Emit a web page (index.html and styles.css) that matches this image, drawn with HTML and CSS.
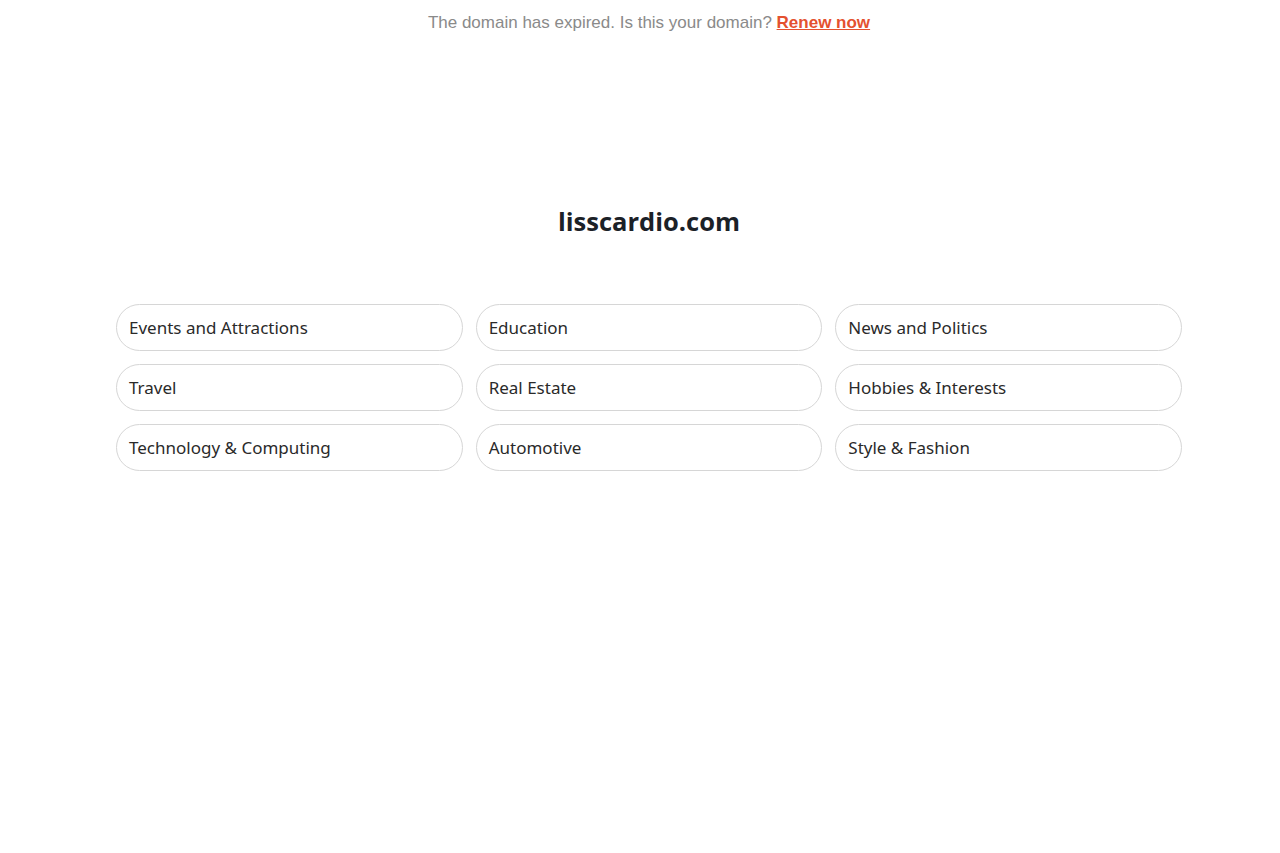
FILE: index.html
```html
<!DOCTYPE html>
<html lang="en">
<head>
<meta charset="utf-8">
<title>lisscardio.com</title>
<link rel="stylesheet" href="styles.css">
</head>
<body>
<div class="page">
  <p class="notice">The domain has expired. Is this your domain? <a class="renew" href="#">Renew now</a></p>
  <h1 class="title">lisscardio.com</h1>
  <div class="grid">
    <a class="pill" href="#">Events and Attractions</a>
    <a class="pill" href="#">Education</a>
    <a class="pill" href="#">News and Politics</a>
    <a class="pill" href="#">Travel</a>
    <a class="pill" href="#">Real Estate</a>
    <a class="pill" href="#">Hobbies &amp; Interests</a>
    <a class="pill" href="#">Technology &amp; Computing</a>
    <a class="pill" href="#">Automotive</a>
    <a class="pill" href="#">Style &amp; Fashion</a>
  </div>
</div>
</body>
</html>
```
FILE: styles.css
```css
html, body {
  margin: 0;
  padding: 0;
  background: #fff;
}
.page {
  padding-left: 18px;
  display: flex;
  flex-direction: column;
  align-items: center;
}
.notice {
  margin: 13px 0 0;
  font-family: "Liberation Sans", Arial, sans-serif;
  font-size: 17px;
  line-height: 20px;
  color: #8a8a8a;
}
.renew {
  color: #e4512f;
  font-weight: bold;
  text-decoration: underline;
}
.title {
  margin: 172px 0 0;
  font-family: "Open Sans", "Noto Sans", sans-serif;
  font-weight: 700;
  font-size: 25.5px;
  line-height: 32px;
  color: #1b2127;
}
.grid {
  margin-top: 67px;
  width: 1066px;
  display: grid;
  grid-template-columns: repeat(3, 1fr);
  column-gap: 13px;
  row-gap: 13px;
}
.pill {
  display: flex;
  align-items: center;
  height: 44px;
  padding: 0 12px 1px;
  box-sizing: content-box;
  border: 1px solid #d6d6d6;
  border-radius: 24px;
  font-family: "Noto Sans", "Open Sans", sans-serif;
  font-size: 17px;
  color: #2a2a2a;
  text-decoration: none;
}
```
